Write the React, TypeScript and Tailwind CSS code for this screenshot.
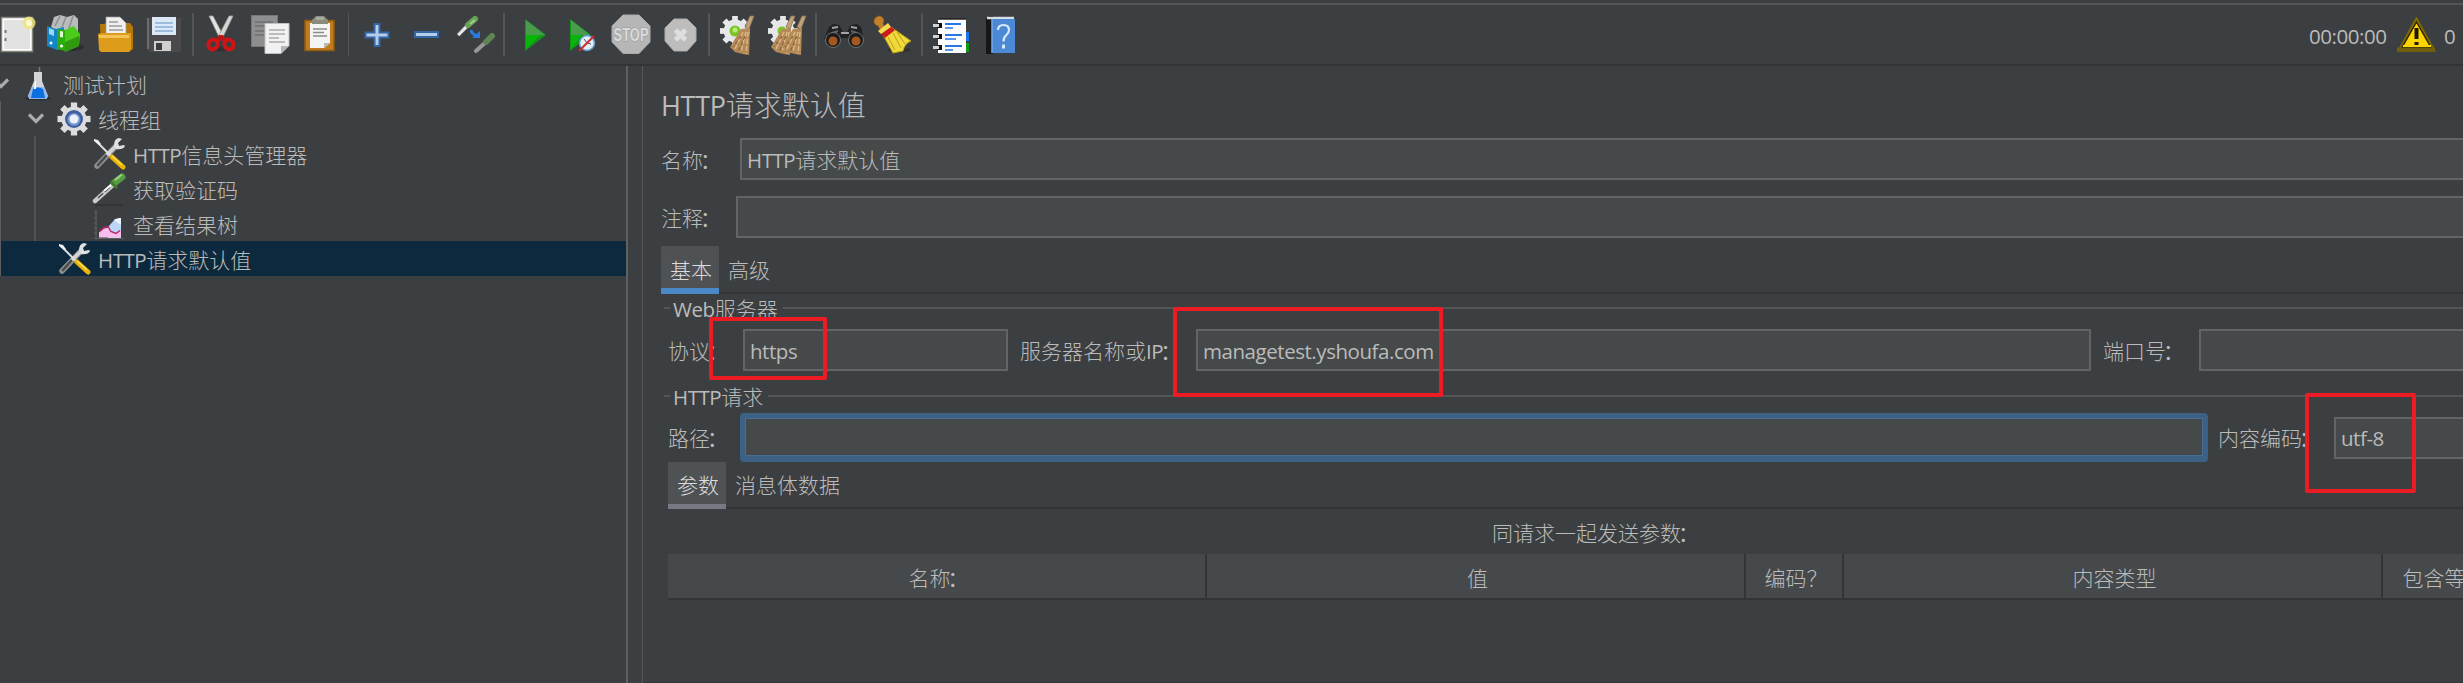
import type { ReactNode } from "react";

/* Splits mixed text so that Latin runs and Chinese runs get their own face. */
function Txt({ children, big = false, className = "" }: { children: string; big?: boolean; className?: string }) {
  const runs = children.match(/[\x20-\x7e]+|：|[^\x20-\x7e：]+/g) ?? [];
  const size = big ? "text-[28px]" : "text-[21px]";
  const latin = big ? "text-[27px] tracking-[-0.3px]" : "text-[20.5px] tracking-[-0.45px]";
  return (
    <span className={`${size} shrink-0 whitespace-nowrap font-['Noto_Sans_CJK_SC',sans-serif] leading-none font-light ${className}`}>
      {runs.map((run, i) =>
        /^[\x20-\x7e]/.test(run) ? (
          <span key={i} className={`font-['Open_Sans',sans-serif] leading-[0] font-normal ${latin}`}>
            {run}
          </span>
        ) : (
          <span key={i} className={run === "：" ? "-ml-[3px] font-normal" : ""}>
            {run}
          </span>
        ),
      )}
    </span>
  );
}

/* A toolbar slot; its drawing uses toolbar coordinates. */
function Slot({ x, w, children }: { x: number; w: number; children: ReactNode }) {
  return (
    <svg className="shrink-0" width={w} height={59} viewBox={`${x} 5 ${w} 59`}>
      {children}
    </svg>
  );
}

function Sep() {
  return <div className="h-[43px] w-[2px] shrink-0 bg-[#555555]" />;
}

function Gear({ cx, cy, r, fill }: { cx: number; cy: number; r: number; fill: string }) {
  return (
    <g fill={fill}>
      <circle cx={cx} cy={cy} r={r * 0.76} />
      {[0, 45, 90, 135].map((a) => (
        <rect key={a} x={cx - r * 0.19} y={cy - r} width={r * 0.38} height={r * 2} transform={`rotate(${a} ${cx} ${cy})`} />
      ))}
    </g>
  );
}

function SmallBroom({ x }: { x: number }) {
  return (
    <g>
      <path d={`M${x + 15} 27 L${x + 20} 16 L${x + 24} 16 L${x + 19} 29 Z`} fill="#bfa27c" stroke="#8c6f4a" strokeWidth=".8" />
      <path d={`M${x + 11} 29 L${x + 20} 28 L${x + 19} 55 L${x + 13} 54 L${x + 5} 52 L${x} 47 Z`} fill="#b58a58" />
      <path d={`M${x + 13} 32 L${x + 5} 49 M${x + 16} 32 L${x + 11} 52 M${x + 18} 32 L${x + 16} 54`} stroke="#dcb98a" strokeWidth="1.4" strokeDasharray="5 2" />
      <path d={`M${x + 11} 36 L${x + 3} 47 M${x + 15} 36 L${x + 8} 52`} stroke="#7d5a32" strokeWidth="1" strokeDasharray="4 2" />
    </g>
  );
}

function Toolbar() {
  return (
    <div className="flex h-[66px] shrink-0 items-center border-b-2 border-[#323537] bg-[#3c3f41]">
      <div className="flex h-full w-full flex-col">
        <div className="mt-[3px] h-[2px] shrink-0 bg-[#555555]" />
        <div className="flex h-[59px] items-center">
          <Slot x={0} w={41}>
            <rect x="1.5" y="17.5" width="31" height="34" fill="#fff" stroke="#85857c" strokeWidth="1.5" />
            <rect x="4" y="20" width="26" height="29" fill="#e2e2e2" />
            <path d="M5.500 30v3M5.500 38v3" stroke="#777" strokeWidth="2" />
            <circle cx="29" cy="23" r="6.500" fill="#efe37e" opacity=".85" />
            <circle cx="29" cy="23" r="3" fill="#fffbd0" />
          </Slot>
          <Slot x={41} w={49}>
            <ellipse cx="70" cy="47" rx="14" ry="4" fill="#2c2e30" />
            <path d="M51 27L54 17L60 15L67 17L74 15L78 19L78 32L60 35Z" fill="#b9bcbd" />
            <path d="M55 26l5-10M62 27l4-10M69 28l4-12" stroke="#8c8f91" strokeWidth="1.500" />
            <path d="M47 26l9 3 8-2v21l-7 2-10-4z" fill="#1386c7" />
            <path d="M49 28l5 2v6l-5-2z" fill="#9fd6f2" />
            <path d="M57 29l8 1v21l-8-2z" fill="#2cae0a" />
            <path d="M65 30l9-4 6 8-1 12-14 6z" fill="#4ccb1d" />
            <path d="M65 42l14-6v10l-14 6z" fill="#2f9a10" />
            <path d="M60 31l3 .5v6l-3-.5z" fill="#e3f8d8" />
            <circle cx="51" cy="43" r="1.500" fill="#fff" />
            <circle cx="61.500" cy="46" r="1.500" fill="#fff" />
          </Slot>
          <Slot x={90} w={50}>
            <path d="M100 24h5v-1h25l3 4v22l-4 3h-28z" fill="#b5780a" />
            <path d="M106 17h14l6 6v14h-20z" fill="#f0f0f0" stroke="#999" strokeWidth=".7" />
            <path d="M109 22h9M109 26h13M109 30h14" stroke="#9b9b9b" strokeWidth="1.500" />
            <path d="M98 34l3-1h30v16l-2 3h-28l-2-2z" fill="#dd9c1b" />
            <path d="M99 35h30v3h-30z" fill="#f4c458" />
          </Slot>
          <Slot x={140} w={52}>
            <path d="M147 18h34v34h-31l-3-3z" fill="#4b494c" />
            <path d="M148 18v31" stroke="#858585" strokeWidth="1.200" />
            <rect x="152" y="17" width="24" height="18" fill="#dbe8f6" />
            <path d="M155 23h18M155 27h18M155 31h18" stroke="#8bafd6" strokeWidth="1.300" />
            <rect x="154" y="41" width="17" height="10" fill="#cfcfcf" />
            <rect x="156" y="43" width="6" height="7" fill="#3c3c3c" />
          </Slot>
          <Sep />
          <Slot x={194} w={51}>
            <ellipse cx="221" cy="49" rx="12" ry="2.500" fill="#303234" />
            <path d="M209 16l4 0 10 19-3 4z" fill="#e4e4e0" stroke="#999" strokeWidth=".8" />
            <path d="M233 16l-4 0-10 19 3 4z" fill="#d6d6d2" stroke="#999" strokeWidth=".8" />
            <path d="M219 35h4l4 6h-12z" fill="#bb1516" />
            <ellipse cx="213" cy="44.500" rx="4.500" ry="5" fill="none" stroke="#cf1415" strokeWidth="4" transform="rotate(30 213 44.500)" />
            <ellipse cx="229" cy="44.500" rx="4.500" ry="5" fill="none" stroke="#cf1415" strokeWidth="4" transform="rotate(-30 229 44.500)" />
          </Slot>
          <Slot x={245} w={50}>
            <rect x="251.500" y="15.500" width="26" height="31" fill="#8d8e8f" stroke="#777" />
            <path d="M255 22h18M255 26h12M255 31h12M255 35h12" stroke="#6f7172" strokeWidth="1.300" />
            <path d="M265 23.500h24v22l-8 8h-16z" fill="#f1f1f1" stroke="#c0c0c0" />
            <path d="M269 30h16M269 34h16M269 38h10M269 42h16" stroke="#aaa" strokeWidth="1.300" />
            <path d="M281 53v-7h8z" fill="#b5b5b5" />
          </Slot>
          <Slot x={295} w={53}>
            <rect x="305" y="20.500" width="29" height="30" fill="#c17d1c" stroke="#8e5c14" strokeWidth="1.500" />
            <path d="M310 23h20v20l-6 5h-14z" fill="#f4f4f2" />
            <path d="M313 29h14M313 32.500h11M313 36h14" stroke="#8b8b88" strokeWidth="1.400" />
            <path d="M324 48v-5h6z" fill="#bbb" />
            <path d="M312 24v-4l4-4h8l4 4v4z" fill="#8b8b7e" />
            <path d="M316 17h8v3h-8z" fill="#aaaaa0" />
          </Slot>
          <div className="h-[43px] w-px shrink-0 bg-[#555555]" />
          <Slot x={349} w={53}>
            <path d="M374.500 24h5v8.500h9v5h-9v8.500h-5v-8.500h-9v-5h9z" fill="#b4cdea" stroke="#3465a4" strokeWidth="2" />
          </Slot>
          <Slot x={402} w={49}>
            <rect x="415" y="32" width="23" height="5" fill="#b4cdea" stroke="#3465a4" strokeWidth="2" />
          </Slot>
          <Slot x={451} w={52}>
            <path d="M458 35L470 23" stroke="#e8e8e8" strokeWidth="3.500" />
            <path d="M457 34L468 22M460 36L471 25" stroke="#55585a" strokeWidth=".8" />
            <path d="M468 25L475 19" stroke="#68a353" strokeWidth="6" strokeLinecap="round" />
            <path d="M470 24L475 20" stroke="#a4d08f" strokeWidth="2" />
            <path d="M471 30C472 35 475 35 478 36" fill="none" stroke="#2a7be4" strokeWidth="3" />
            <path d="M480 31v7h-8z" fill="#2a7be4" />
            <g opacity=".75">
              <path d="M476 51L487 41" stroke="#b5b5b5" strokeWidth="4" strokeLinecap="round" />
              <path d="M486 42L492 36" stroke="#6a9b58" strokeWidth="6" strokeLinecap="round" />
            </g>
          </Slot>
          <Sep />
          <Slot x={505} w={53}>
            <path d="M525 19L546 35L525 51z" fill="#12961a" />
            <path d="M526 20L545 35H526z" fill="#489c4b" />
            <path d="M526 35h14L526 49z" fill="#08b608" />
          </Slot>
          <Slot x={558} w={48}>
            <path d="M570 19L591 35L570 51z" fill="#12961a" />
            <path d="M571 20L590 35H571z" fill="#489c4b" />
            <path d="M571 35h11L571 49z" fill="#08b608" />
            <circle cx="587" cy="43" r="7.500" fill="#e6eef5" stroke="#5e9bd1" strokeWidth="1.500" />
            <path d="M584 39l3 4 4 1" fill="none" stroke="#456" strokeWidth="1" />
            <path d="M579 51L594 36" stroke="#d32a2a" strokeWidth="2" />
          </Slot>
          <Slot x={606} w={49}>
            <path d="M623 15h16l11 11v16l-11 11.500h-16l-11-11.500v-16z" fill="#b6b6b6" stroke="#ababab" />
            <text transform="translate(631 41) scale(.72 1)" textAnchor="middle" fontFamily="Liberation Sans, sans-serif" fontWeight="bold" fontSize="18" fill="#dadada" stroke="#a2a2a2" strokeWidth="1.500" paintOrder="stroke">
              STOP
            </text>
          </Slot>
          <Slot x={655} w={53}>
            <path d="M674 19h13l9 9v13l-9 10h-13l-9-10v-13z" fill="#bdbdbd" stroke="#acacac" />
            <path d="M675.500 30l10 10M685.500 30l-10 10" stroke="#dedede" strokeWidth="5" />
          </Slot>
          <Sep />
          <Slot x={710} w={52}>
            <Gear cx={735} cy={31} r={15} fill="#e6e7e8" />
            <circle cx="735" cy="31" r="5.500" fill="#7cc524" />
            <circle cx="735" cy="30" r="2.500" fill="#b9ea7c" />
            <SmallBroom x={730} />
          </Slot>
          <Slot x={762} w={53}>
            <Gear cx={783} cy={31} r={15} fill="#e6e7e8" />
            <circle cx="782" cy="31" r="4.500" fill="#7cc524" />
            <SmallBroom x={771} />
            <SmallBroom x={782} />
          </Slot>
          <Sep />
          <Slot x={817} w={51}>
            <path d="M829 27l4-3 6 1 4 7h4l4-7 6-1 4 3 3 12-9 5-8-6h-5l-9 6-9-5z" fill="#202122" />
            <path d="M832 28l6-1M851 27l6 1M841 33h8" stroke="#a3a3a3" strokeWidth="2" />
            <path d="M832 33l6-2M851 31l6 2" stroke="#5d5f61" strokeWidth="2" />
            <circle cx="833" cy="40" r="7.500" fill="#1c1c1d" stroke="#707274" />
            <circle cx="856" cy="40" r="7.500" fill="#1c1c1d" stroke="#707274" />
            <circle cx="833" cy="41" r="4.500" fill="#a4581f" />
            <circle cx="856" cy="41" r="4.500" fill="#a4581f" />
          </Slot>
          <Slot x={868} w={53}>
            <ellipse cx="899" cy="50" rx="12" ry="2.500" fill="#303234" />
            <path d="M875 18q6-5 9 2l-1 4 5 8-5 3-5-9q-6-2-3-8z" fill="#c2812c" stroke="#8d5b1d" strokeWidth=".8" />
            <path d="M891 27l20 14q-6 2-8 10l-10 2-10-18z" fill="#f0d93a" stroke="#b39c18" />
            <path d="M893 33l8 15M897 32l8 12M888 37l7 13" stroke="#b99f19" strokeWidth="1" />
            <path d="M881 34l9-8 5 4-10 8z" fill="#cc1b1b" />
            <path d="M878 31l10-8 3 4-10 7z" fill="#f1dc52" />
          </Slot>
          <Sep />
          <Slot x={923} w={52}>
            <rect x="963" y="32" width="6" height="9" fill="#1e73e8" />
            <rect x="963" y="43" width="6" height="9" fill="#119a17" />
            <rect x="938" y="19" width="28" height="34" fill="#fdfdfd" />
            <path d="M938 19h28" stroke="#222" strokeWidth="1.500" />
            <path d="M945 24h16M945 35h17M945 46h17" stroke="#2676e8" strokeWidth="2" />
            <path d="M945 28h8M945 39h11M945 50h8" stroke="#2676e8" strokeWidth="1.500" />
            <path d="M937 25.500h5M937 36.500h5M937 47.500h5" stroke="#111" strokeWidth="5" />
            <path d="M933 25.500h6M933 36.500h6M933 47.500h6" stroke="#d2d2d2" strokeWidth="3" />
          </Slot>
          <Slot x={975} w={55}>
            <path d="M986 19l4-3h3v38h-7z" fill="#151618" />
            <path d="M987 18h27" stroke="#d6dde5" strokeWidth="2.500" />
            <rect x="992" y="19" width="23" height="34" fill="#4b89d6" />
            <path d="M992 19v34" stroke="#79abe6" strokeWidth="1.500" />
            <path d="M998 30q0-5 5.500-5 5.500 0 5.500 5 0 3-3 5.500-2.500 2-2.500 6" fill="none" stroke="#d9e8fa" strokeWidth="2.200" />
            <rect x="1002" y="44.500" width="3" height="4" fill="#d9e8fa" />
          </Slot>
          <div className="grow" />
          <Txt className="w-[88px] pt-px tracking-tight">00:00:00</Txt>
          <svg className="shrink-0" width="47" height="59" viewBox="2397 5 47 59">
            <path d="M2416.500 17.500L2435 51H2398z" fill="#8a7408" stroke="#7a6606" strokeWidth="1.500" strokeLinejoin="round" />
            <path d="M2416.500 22L2431 47.500H2402z" fill="#ffd500" stroke="#2a2503" strokeWidth="1.500" />
            <path d="M2397 47.500h38v4h-38z" fill="#71600c" />
            <path d="M2403 46h28" stroke="#ffd500" strokeWidth="2" />
            <path d="M2416.500 28v11M2416.500 42v3" stroke="#1d1a02" strokeWidth="4" />
          </svg>
          <Txt className="w-[19px] pt-px">0</Txt>
        </div>
      </div>
    </div>
  );
}

function Chevron() {
  return (
    <svg className="shrink-0" width="16" height="12" viewBox="0 0 16 12">
      <path d="M1 1.500L8 8.500L15 1.500" fill="none" stroke="#a9abac" strokeWidth="3.200" />
    </svg>
  );
}

function Flask() {
  return (
    <svg className="shrink-0" width="34" height="34" viewBox="-2 0 34 34">
      <ellipse cx="14" cy="31.500" rx="13" ry="1.800" fill="#2a2c2e" />
      <path d="M10 5h8v9l6 15-1.500 3h-17L4 29l6-15z" fill="#d3d5d8" />
      <path d="M8 20h12l4 9-1.500 3h-17L4 29z" fill="#8fb8ea" />
      <path d="M9 22q5-3 10 0l2 9h-14z" fill="#0b6fe0" />
      <path d="M11 14h1v8h-2z" fill="#fff" />
      <path d="M15.500 0v5" stroke="#777" strokeWidth="1.500" />
    </svg>
  );
}

function Cog() {
  return (
    <svg className="shrink-0" width="34" height="34" viewBox="0 0 34 34">
      <Gear cx={17} cy={17} r={16.5} fill="#dcdcdc" />
      <circle cx="17" cy="17" r="9" fill="#3d5f9f" />
      <circle cx="17" cy="17.500" r="6.500" fill="#7596cf" />
      <circle cx="17" cy="17" r="4.500" fill="#eef2f8" />
    </svg>
  );
}

function Tools() {
  return (
    <svg className="shrink-0" width="34" height="34" viewBox="0 0 34 34">
      <path d="M5 29L24 9" stroke="#8e9091" strokeWidth="5.500" strokeLinecap="round" />
      <path d="M6 28L14 19" stroke="#4a4c4d" strokeWidth="2.600" strokeLinecap="round" />
      <path d="M15 18L25 8" stroke="#d4d5d5" strokeWidth="3.500" />
      <path d="M22 8q0-6 5-7l3 1-4 4 1 3 5-1 1 1q-2 4-9 3z" fill="#dfe0e0" />
      <path d="M4 4L19 19" stroke="#dedede" strokeWidth="2" />
      <path d="M2 2l4 1 3 4-2 1-5-4z" fill="#efefef" />
      <path d="M20 20L31 30" stroke="#eab30a" strokeWidth="5" strokeLinecap="round" />
      <path d="M20 19L30 28" stroke="#ffe05a" strokeWidth="1.300" />
    </svg>
  );
}

function Dropper() {
  return (
    <svg className="shrink-0" width="34" height="34" viewBox="0 0 34 34">
      <path d="M3 33h28" stroke="#303234" strokeWidth="1.500" />
      <path d="M3 29L22 12" stroke="#c9caca" strokeWidth="4.500" strokeLinecap="round" />
      <path d="M6 26L18 15" stroke="#4c4e4f" strokeWidth="1.500" strokeDasharray="7 2" />
      <path d="M12 19L20 12" stroke="#fff" strokeWidth="1.800" />
      <path d="M22 11L30 5" stroke="#569c42" strokeWidth="7" strokeLinecap="round" />
      <path d="M23 8L30 2.500" stroke="#a0cf8b" strokeWidth="2" />
      <path d="M18.500 9.500L25 16" stroke="#3f7d2c" strokeWidth="2.500" />
    </svg>
  );
}

function Chart() {
  return (
    <svg className="shrink-0" width="34" height="34" viewBox="0 0 34 34">
      <path d="M4 3v29M2 31.500h30" stroke="#5c5e60" strokeWidth="1.200" />
      <path d="M2 6h3M2 11h3M2 16h3M2 21h3M2 26h3" stroke="#5c5e60" />
      <path d="M17 19l6-7 6-1v20h-13z" fill="#bcd6f8" />
      <path d="M22 13l5-2h2v7z" fill="#eef5ff" />
      <path d="M7 30.500v-5l5-4 5-1 2 5 5 1 5-3v7z" fill="#f8bdea" />
      <path d="M8 24l4-3.500 4-1 3 5 5 2 4-3" fill="none" stroke="#b5256a" strokeWidth="1.400" />
    </svg>
  );
}

function TreeRow({ pad, open, icon, label, selected = false }: { pad: string; open?: boolean; icon: ReactNode; label: string; selected?: boolean }) {
  return (
    <div className={`flex h-[35px] shrink-0 items-center ${pad} ${selected ? "bg-[#0d293e]" : ""}`}>
      {open && <Chevron />}
      {open && <div className="w-[13px] shrink-0" />}
      {icon}
      <Txt className="pt-px pl-[7px]">{label}</Txt>
    </div>
  );
}

function Tree() {
  return (
    <div className="flex w-[626px] shrink-0 flex-col overflow-hidden">
      <TreeRow pad="-ml-[7px]" open icon={<Flask />} label="测试计划" />
      <div className="flex flex-col border-l border-[#5b5d5f]">
        <TreeRow pad="pl-[27px]" open icon={<Cog />} label="线程组" />
        <div className="ml-[33px] flex flex-col border-l-2 border-[#515456]">
          <TreeRow pad="pl-[56px]" icon={<Tools />} label="HTTP信息头管理器" />
          <TreeRow pad="pl-[56px]" icon={<Dropper />} label="获取验证码" />
          <TreeRow pad="pl-[56px]" icon={<Chart />} label="查看结果树" />
        </div>
        <TreeRow pad="pl-[56px]" icon={<Tools />} label="HTTP请求默认值" selected />
      </div>
    </div>
  );
}

function Field({ className, children }: { className: string; children?: string }) {
  return (
    <div className={`flex h-[42px] shrink-0 items-center border-2 border-[#646464] bg-[#45494a] pl-[5px] ${className}`}>
      {children && <Txt>{children}</Txt>}
    </div>
  );
}

function GroupTitle({ children }: { children: string }) {
  return (
    <div className="ml-[21px] flex h-[28px] shrink-0 items-center">
      <div className="h-[2px] w-[6px] bg-[#555555]" />
      <Txt className="pr-[5px] pl-[3px]">{children}</Txt>
      <div className="h-[2px] grow bg-[#555555]" />
    </div>
  );
}

function Tabs({ active, other, className, bar }: { active: string; other: string; className: string; bar: string }) {
  return (
    <div className={`flex shrink-0 ${className}`}>
      <div className={`flex w-[58px] items-center justify-center bg-[#4e5254] pl-[2px] ${bar}`}>
        <Txt className="text-[#dcdcdc]">{active}</Txt>
      </div>
      <div className="flex grow items-center border-b-2 border-[#323537] pl-[9px]">
        <Txt>{other}</Txt>
      </div>
    </div>
  );
}

const columns = [
  { label: "名称：", width: "w-[539px]" },
  { label: "值", width: "w-[539px]" },
  { label: "编码？", width: "w-[98px]" },
  { label: "内容类型", width: "w-[539px]" },
  { label: "包含等于？", width: "w-[142px]" },
];

function Editor() {
  return (
    <div className="flex min-w-0 grow flex-col overflow-hidden border-l border-[#555759]">
      <div className="flex h-[72px] shrink-0 items-center pt-[3px] pl-[18px]">
        <Txt big>HTTP请求默认值</Txt>
      </div>
      <div className="flex h-[42px] shrink-0 items-center pl-[18px]">
        <Txt className="w-[79px]">名称：</Txt>
        <Field className="grow border-r-0">HTTP请求默认值</Field>
      </div>
      <div className="mt-[15px] flex h-[43px] shrink-0 items-center pl-[18px]">
        <Txt className="w-[75px] pt-px">注释：</Txt>
        <Field className="grow border-r-0" />
      </div>
      <Tabs className="mt-[8px] ml-[18px] h-[48px]" active="基本" other="高级" bar="border-b-6 border-[#4a88c7] pt-[4px]" />
      <GroupTitle>Web服务器</GroupTitle>
      <div className="mt-[7px] flex h-[42px] shrink-0 items-center pl-[25px]">
        <Txt className="w-[75px]">协议：</Txt>
        <Field className="w-[265px]">https</Field>
        <Txt className="w-[188px] pl-[12px]">服务器名称或IP：</Txt>
        <Field className="w-[895px]">managetest.yshoufa.com</Field>
        <Txt className="w-[108px] pl-[12px]">端口号：</Txt>
        <Field className="grow border-r-0" />
      </div>
      <div className="h-[11px] shrink-0" />
      <GroupTitle>HTTP请求</GroupTitle>
      <div className="mt-[3px] flex h-[49px] shrink-0 items-center pl-[25px]">
        <Txt className="w-[72px]">路径：</Txt>
        <div className="h-[49px] w-[1468px] shrink-0 rounded-[4px] border-5 border-b-6 border-[#3d6185] bg-[#45494a] shadow-[inset_0_0_0_1px_#466d94]" />
        <Txt className="w-[126px] pl-[10px]">内容编码：</Txt>
        <Field className="grow border-r-0">utf-8</Field>
      </div>
      <Tabs className="ml-[25px] h-[47px]" active="参数" other="消息体数据" bar="border-b-5 border-[#777a84] pt-[3px]" />
      <div className="flex h-[45px] shrink-0 items-center pt-px pl-[849px]">
        <Txt>同请求一起发送参数：</Txt>
      </div>
      <div className="ml-[25px] flex h-[46px] shrink-0 border-b-2 border-[#323537] bg-[#45494b]">
        {columns.map((c) => (
          <div key={c.label} className={`flex shrink-0 items-center justify-center border-r-2 border-[#323537] pt-[2px] pl-[4px] ${c.width}`}>
            <Txt>{c.label}</Txt>
          </div>
        ))}
      </div>
      <div className="grow" />
      <div className="h-px shrink-0 bg-[#323537]" />
    </div>
  );
}

export default function App() {
  return (
    <div className="relative flex h-[683px] w-[2463px] flex-col overflow-hidden bg-[#3c3f41] text-[#bbbbbb]">
      <Toolbar />
      <div className="flex min-h-0 grow">
        <Tree />
        <div className="w-[2px] shrink-0 bg-[#5e6062]" />
        <div className="w-[14px] shrink-0" />
        <Editor />
      </div>
      <div className="absolute top-[317px] left-[709px] h-[63px] w-[118px] rounded-[2px] border-4 border-[#ed1c24]" />
      <div className="absolute top-[307px] left-[1173px] h-[90px] w-[270px] rounded-[2px] border-4 border-[#ed1c24]" />
      <div className="absolute top-[393px] left-[2305px] h-[100px] w-[111px] rounded-[2px] border-4 border-[#ed1c24]" />
    </div>
  );
}
